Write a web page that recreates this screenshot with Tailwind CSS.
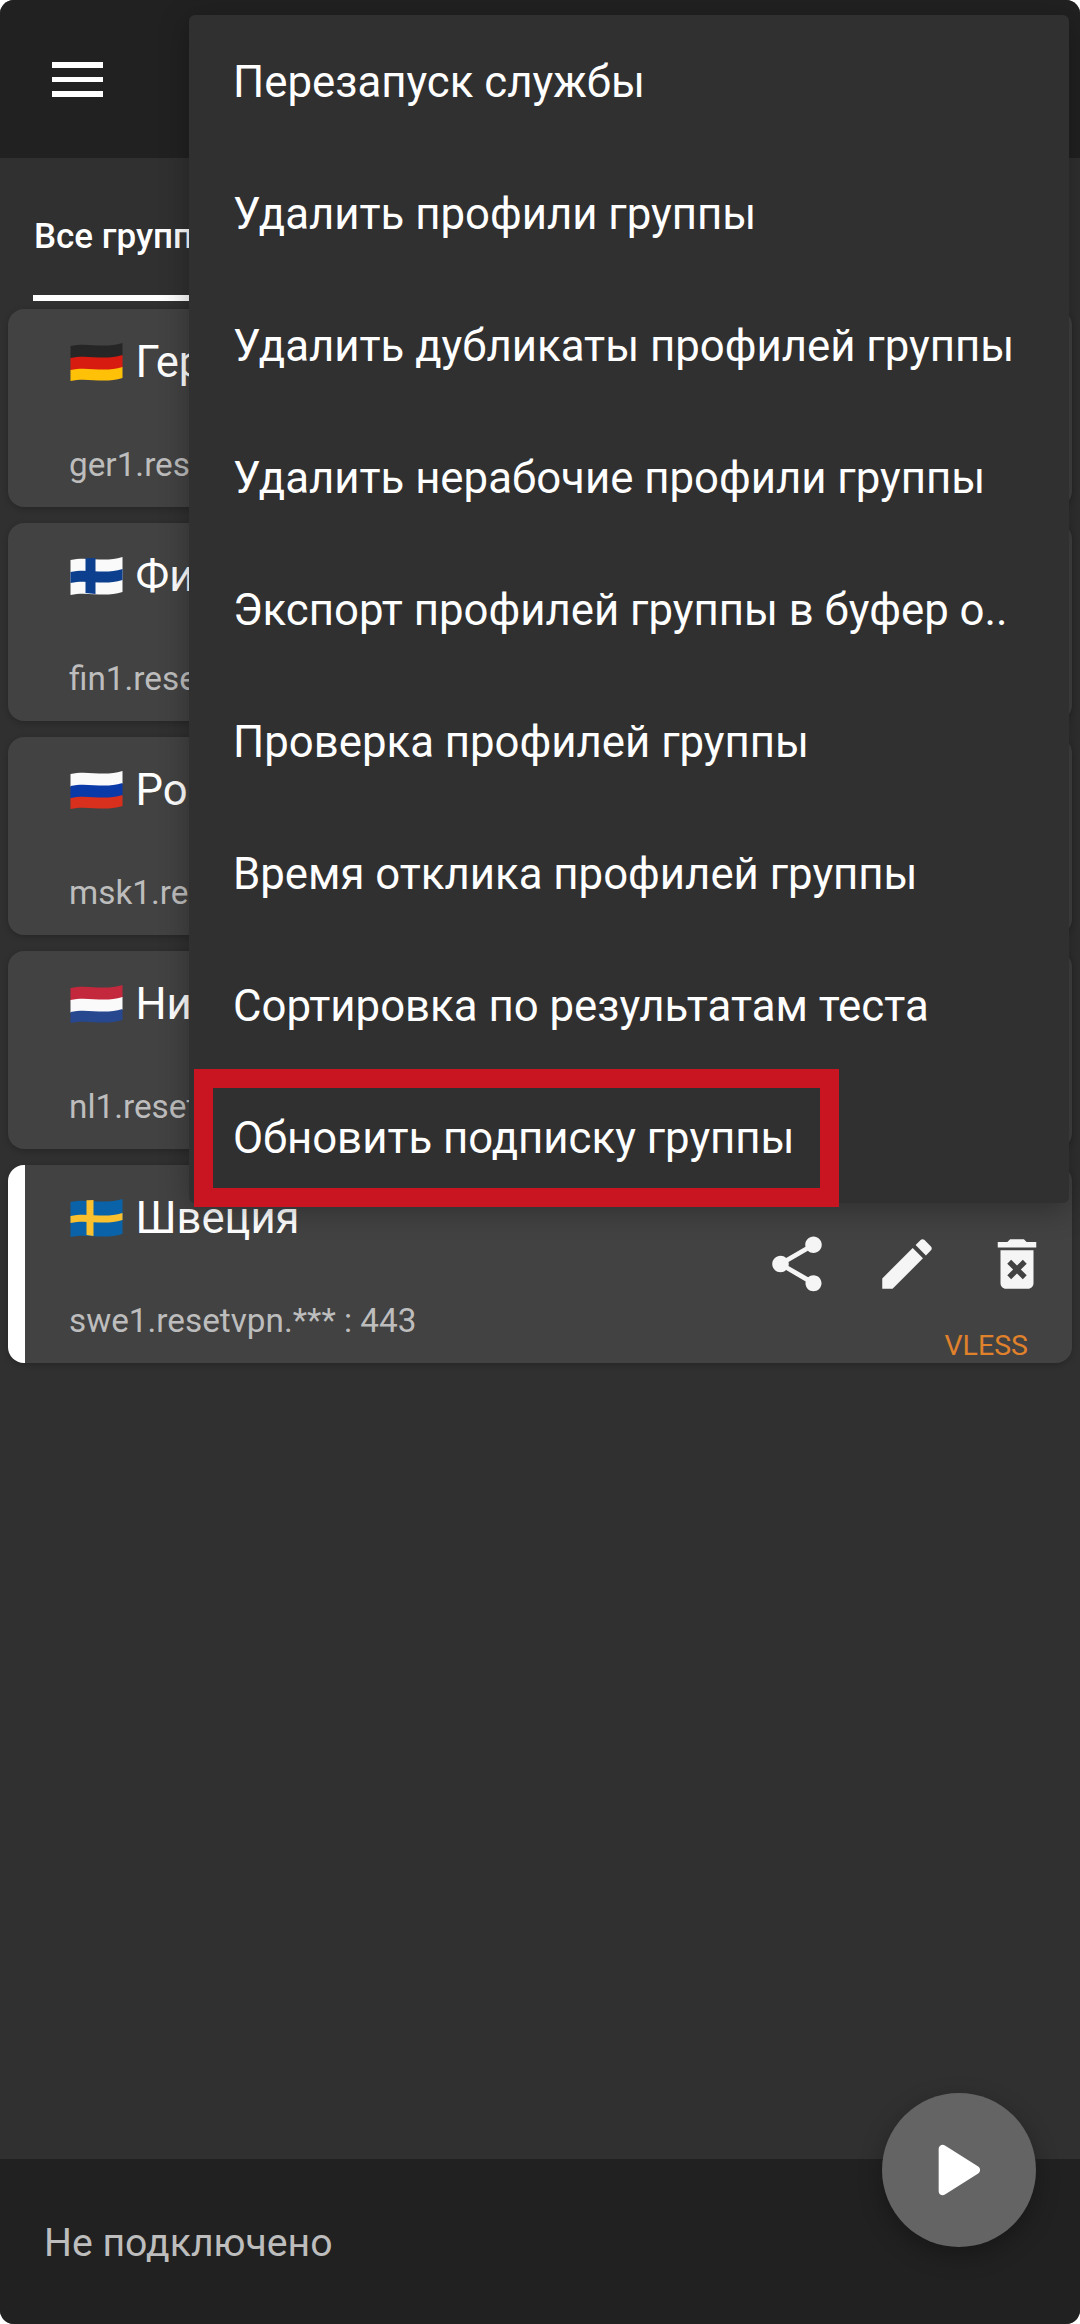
<!DOCTYPE html>
<html lang="ru">
<head>
<meta charset="utf-8">
<script src="https://cdn.jsdelivr.net/npm/@tailwindcss/browser@4"></script>
</head>
<body class="bg-white">
<div class="relative w-[1080px] h-[2324px] rounded-[14px] overflow-hidden bg-[#303030] flex flex-col font-['Roboto',sans-serif] text-white">

  <header class="h-[158px] shrink-0 bg-[#212121] pl-[52px] pt-[62px]">
    <div class="w-[51px] flex flex-col gap-[9px]">
      <div class="h-[5.5px] bg-white"></div>
      <div class="h-[5.5px] bg-white"></div>
      <div class="h-[5.5px] bg-white"></div>
    </div>
  </header>

  <nav class="h-[143px] shrink-0 pl-[33px] flex">
    <div class="w-[260px] h-full border-b-[6px] border-white pl-[1px] pt-[58px] text-[35px] leading-[42px] font-medium">Все группы</div>
  </nav>

  <main class="flex flex-col gap-[16px] px-[8px] pt-[8px] grow">

    <div class="h-[198px] rounded-[16px] bg-[#424242] shadow-[0_2px_6px_rgba(0,0,0,0.2)] border-l-[17px] border-transparent pl-[45px] flex justify-between">
      <div>
        <div class="flex items-center gap-[12.5px] pt-[30px] h-[78px] text-[43.6px] leading-[48px]">
          <svg class="w-[53px] h-[40px] shrink-0 -translate-y-[1px]" viewBox="0 1 52 40"><path fill="#262626" d="M0 5C17 1 33 8 52 2V15C33 21 17 14 0 18Z"/><path fill="#d81b10" d="M0 17C17 13 33 20 52 14V27C33 33 17 26 0 30Z"/><path fill="#ffc107" d="M0 29C17 25 33 32 52 26V37C33 43 17 36 0 40Z"/></svg>
          <span>Германия</span>
        </div>
        <div class="mt-[58px] -ml-[1px] text-[33.3px] leading-[40px] text-[#bdbdbd]">ger1.resetvpn.*** : 443</div>
      </div>
      <div class="flex flex-col items-end pr-[22px] pt-[66px]">
        <div class="flex gap-[44px]">
          <svg class="w-[66px] h-[66px]" viewBox="0 0 24 24" fill="#f5f5f5"><path d="M18 16.08c-.76 0-1.44.3-1.96.77L8.91 12.7c.05-.23.09-.46.09-.7s-.04-.47-.09-.7l7.05-4.11c.54.5 1.25.81 2.04.81 1.66 0 3-1.34 3-3s-1.34-3-3-3-3 1.34-3 3c0 .24.04.47.09.7L8.04 9.81C7.5 9.31 6.79 9 6 9c-1.66 0-3 1.34-3 3s1.34 3 3 3c.79 0 1.5-.31 2.04-.81l7.12 4.16c-.05.21-.08.43-.08.65 0 1.61 1.31 2.92 2.92 2.92 1.61 0 2.92-1.31 2.92-2.92s-1.31-2.92-2.92-2.92z"/></svg>
          <svg class="w-[66px] h-[66px]" viewBox="0 0 24 24" fill="#f5f5f5"><path d="M3 17.25V21h3.75L17.81 9.94l-3.75-3.75L3 17.25zM20.71 7.04c.39-.39.39-1.02 0-1.41l-2.34-2.34c-.39-.39-1.02-.39-1.41 0l-1.83 1.83 3.75 3.75 1.83-1.83z"/></svg>
          <svg class="w-[66px] h-[66px]" viewBox="0 0 24 24" fill="#f5f5f5"><path d="M6 19c0 1.1.9 2 2 2h8c1.1 0 2-.9 2-2V7H6v12zm2.46-7.12l1.41-1.41L12 12.59l2.12-2.12 1.41 1.41L13.41 14l2.12 2.12-1.41 1.41L12 15.41l-2.12 2.12-1.41-1.41L10.59 14l-2.13-2.12zM15.5 4l-1-1h-5l-1 1H5v2h14V4z"/></svg>
        </div>
        <div class="mt-[32px] mr-[22px] text-[28.5px] leading-[34px] text-[#e0812b]">VLESS</div>
      </div>
    </div>

    <div class="h-[198px] rounded-[16px] bg-[#424242] shadow-[0_2px_6px_rgba(0,0,0,0.2)] border-l-[17px] border-transparent pl-[45px] flex justify-between">
      <div>
        <div class="flex items-center gap-[12.5px] pt-[30px] h-[78px] text-[43.6px] leading-[48px]">
          <svg class="w-[53px] h-[40px] shrink-0 -translate-y-[1px]" viewBox="0 1 52 40"><path fill="#fafafa" d="M0 5C17 1 33 8 52 2V37C33 43 17 36 0 40Z"/><path fill="#0d3f8f" d="M15 3.2L25 3V39L15 38Z"/><path fill="#0d3f8f" d="M0 17C17 13 33 20 52 14V25C33 31 17 24 0 28Z"/></svg>
          <span>Финляндия</span>
        </div>
        <div class="mt-[58px] -ml-[1px] text-[33.3px] leading-[40px] text-[#bdbdbd]">fin1.resetvpn.*** : 443</div>
      </div>
      <div class="flex flex-col items-end pr-[22px] pt-[166px]">
        <div class="mr-[22px] text-[28.5px] leading-[34px] text-[#e0812b]">VLESS</div>
      </div>
    </div>

    <div class="h-[198px] rounded-[16px] bg-[#424242] shadow-[0_2px_6px_rgba(0,0,0,0.2)] border-l-[17px] border-transparent pl-[45px] flex justify-between">
      <div>
        <div class="flex items-center gap-[12.5px] pt-[30px] h-[78px] text-[43.6px] leading-[48px]">
          <svg class="w-[53px] h-[40px] shrink-0 -translate-y-[1px]" viewBox="0 1 52 40"><path fill="#fafafa" d="M0 5C17 1 33 8 52 2V15C33 21 17 14 0 18Z"/><path fill="#0a39a8" d="M0 17C17 13 33 20 52 14V27C33 33 17 26 0 30Z"/><path fill="#d8301c" d="M0 29C17 25 33 32 52 26V37C33 43 17 36 0 40Z"/></svg>
          <span>Россия</span>
        </div>
        <div class="mt-[58px] -ml-[1px] text-[33.3px] leading-[40px] text-[#bdbdbd]">msk1.resetvpn.*** : 443</div>
      </div>
      <div class="flex flex-col items-end pr-[22px] pt-[166px]">
        <div class="mr-[22px] text-[28.5px] leading-[34px] text-[#e0812b]">VLESS</div>
      </div>
    </div>

    <div class="h-[198px] rounded-[16px] bg-[#424242] shadow-[0_2px_6px_rgba(0,0,0,0.2)] border-l-[17px] border-transparent pl-[45px] flex justify-between">
      <div>
        <div class="flex items-center gap-[12.5px] pt-[30px] h-[78px] text-[43.6px] leading-[48px]">
          <svg class="w-[53px] h-[40px] shrink-0 -translate-y-[1px]" viewBox="0 1 52 40"><path fill="#c4283c" d="M0 5C17 1 33 8 52 2V15C33 21 17 14 0 18Z"/><path fill="#fafafa" d="M0 17C17 13 33 20 52 14V27C33 33 17 26 0 30Z"/><path fill="#27478f" d="M0 29C17 25 33 32 52 26V37C33 43 17 36 0 40Z"/></svg>
          <span>Нидерланды</span>
        </div>
        <div class="mt-[58px] -ml-[1px] text-[33.3px] leading-[40px] text-[#bdbdbd]">nl1.resetvpn.*** : 443</div>
      </div>
      <div class="flex flex-col items-end pr-[22px] pt-[166px]">
        <div class="mr-[22px] text-[28.5px] leading-[34px] text-[#e0812b]">VLESS</div>
      </div>
    </div>

    <div class="h-[198px] rounded-[16px] bg-[#424242] shadow-[0_2px_6px_rgba(0,0,0,0.2)] border-l-[17px] border-white pl-[45px] flex justify-between">
      <div>
        <div class="flex items-center gap-[12.5px] pt-[30px] h-[78px] text-[43.6px] leading-[48px]">
          <svg class="w-[53px] h-[40px] shrink-0 -translate-y-[1px]" viewBox="0 1 52 40"><path fill="#0a63a8" d="M0 5C17 1 33 8 52 2V37C33 43 17 36 0 40Z"/><path fill="#fbc02d" d="M16 3.2L23 3V39L16 38Z"/><path fill="#fbc02d" d="M0 19C17 15 33 22 52 16V23C33 29 17 22 0 26Z"/></svg>
          <span>Швеция</span>
        </div>
        <div class="mt-[58px] -ml-[1px] text-[33.3px] leading-[40px] text-[#bdbdbd]">swe1.resetvpn.*** : 443</div>
      </div>
      <div class="flex flex-col items-end pr-[22px] pt-[66px]">
        <div class="flex gap-[44px]">
          <svg class="w-[66px] h-[66px]" viewBox="0 0 24 24" fill="#f5f5f5"><path d="M18 16.08c-.76 0-1.44.3-1.96.77L8.91 12.7c.05-.23.09-.46.09-.7s-.04-.47-.09-.7l7.05-4.11c.54.5 1.25.81 2.04.81 1.66 0 3-1.34 3-3s-1.34-3-3-3-3 1.34-3 3c0 .24.04.47.09.7L8.04 9.81C7.5 9.31 6.79 9 6 9c-1.66 0-3 1.34-3 3s1.34 3 3 3c.79 0 1.5-.31 2.04-.81l7.12 4.16c-.05.21-.08.43-.08.65 0 1.61 1.31 2.92 2.92 2.92 1.61 0 2.92-1.31 2.92-2.92s-1.31-2.92-2.92-2.92z"/></svg>
          <svg class="w-[66px] h-[66px]" viewBox="0 0 24 24" fill="#f5f5f5"><path d="M3 17.25V21h3.75L17.81 9.94l-3.75-3.75L3 17.25zM20.71 7.04c.39-.39.39-1.02 0-1.41l-2.34-2.34c-.39-.39-1.02-.39-1.41 0l-1.83 1.83 3.75 3.75 1.83-1.83z"/></svg>
          <svg class="w-[66px] h-[66px]" viewBox="0 0 24 24" fill="#f5f5f5"><path d="M6 19c0 1.1.9 2 2 2h8c1.1 0 2-.9 2-2V7H6v12zm2.46-7.12l1.41-1.41L12 12.59l2.12-2.12 1.41 1.41L13.41 14l2.12 2.12-1.41 1.41L12 15.41l-2.12 2.12-1.41-1.41L10.59 14l-2.13-2.12zM15.5 4l-1-1h-5l-1 1H5v2h14V4z"/></svg>
        </div>
        <div class="mt-[32px] mr-[22px] text-[28.5px] leading-[34px] text-[#e0812b]">VLESS</div>
      </div>
    </div>
  </main>

  <footer class="h-[165px] shrink-0 bg-[#212121] flex items-center pl-[44px] pt-[4px] text-[39.2px] text-[#bdbdbd]">Не подключено</footer>

  <button class="absolute left-[882px] top-[2093px] w-[154px] h-[154px] rounded-full bg-[#646464] shadow-[0_8px_24px_rgba(0,0,0,0.3)] flex items-center justify-center pr-[8px]">
    <svg class="w-[98px] h-[98px]" viewBox="0 0 24 24" fill="#ffffff"><path d="M8 6.82v10.36c0 .79.87 1.27 1.54.84l8.14-5.18c.62-.39.62-1.29 0-1.69L9.54 5.98C8.87 5.55 8 6.03 8 6.82z"/></svg>
  </button>

  <div class="absolute left-[189px] top-[15px] w-[880px] h-[1188px] rounded-[6px] bg-[#303030] shadow-[0_6px_30px_rgba(0,0,0,0.3)] pt-[2px] text-[43.75px]">
    <div class="h-[132px] px-[44px] flex items-center whitespace-nowrap">Перезапуск службы</div>
    <div class="h-[132px] px-[44px] flex items-center whitespace-nowrap">Удалить профили группы</div>
    <div class="h-[132px] px-[44px] flex items-center whitespace-nowrap">Удалить дубликаты профилей группы</div>
    <div class="h-[132px] px-[44px] flex items-center whitespace-nowrap">Удалить нерабочие профили группы</div>
    <div class="h-[132px] px-[44px] flex items-center whitespace-nowrap">Экспорт профилей группы в буфер о..</div>
    <div class="h-[132px] px-[44px] flex items-center whitespace-nowrap">Проверка профилей группы</div>
    <div class="h-[132px] px-[44px] flex items-center whitespace-nowrap">Время отклика профилей группы</div>
    <div class="h-[132px] px-[44px] flex items-center whitespace-nowrap">Сортировка по результатам теста</div>
    <div class="h-[132px] px-[44px] flex items-center whitespace-nowrap">Обновить подписку группы</div>
  </div>

  <div class="absolute left-[194px] top-[1069px] w-[645px] h-[138px] border-[19px] border-[#c91421]"></div>
</div>
</body>
</html>
